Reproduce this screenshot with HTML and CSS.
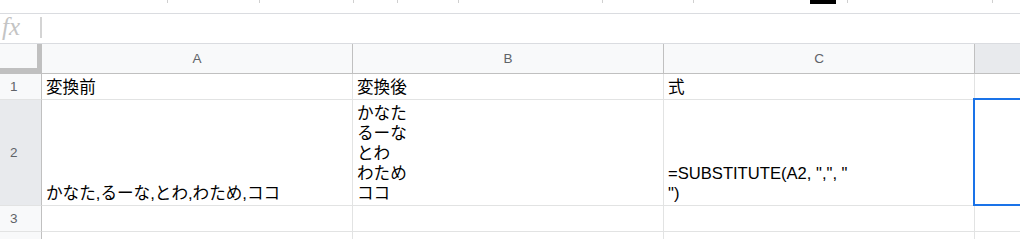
FILE: index.html
```html
<!DOCTYPE html>
<html lang="ja">
<head>
<meta charset="utf-8">
<link rel="stylesheet" href="styles.css">
</head>
<body>
<div class="toolbar">
  <span class="tick t1"></span>
  <span class="tick t2"></span>
  <span class="tick t3"></span>
  <span class="tick t4"></span>
  <span class="tick t5"></span>
  <span class="tick t6"></span>
  <span class="tick t7"></span>
  <span class="blk"></span>
  <span class="tick t8"></span>
  <span class="tick t9"></span>
</div>
<div class="fbar">
  <span class="fx">fx</span>
  <span class="fdiv"></span>
</div>
<div class="grid">
  <div class="corner"></div>
  <div class="ch">A</div>
  <div class="ch">B</div>
  <div class="ch">C</div>
  <div class="ch sel">&nbsp;</div>

  <div class="rh">1</div>
  <div class="cell">変換前</div>
  <div class="cell">変換後</div>
  <div class="cell">式</div>
  <div class="cell"></div>

  <div class="rh sel">2</div>
  <div class="cell">かなた,るーな,とわ,わため,ココ</div>
  <div class="cell">かなた<br>るーな<br>とわ<br>わため<br>ココ</div>
  <div class="cell">=SUBSTITUTE(A2, ",", "<br>")</div>
  <div class="cell active"><div class="selbox"></div></div>

  <div class="rh">3</div>
  <div class="cell"></div>
  <div class="cell"></div>
  <div class="cell"></div>
  <div class="cell"></div>

  <div class="rh">4</div>
  <div class="cell"></div>
  <div class="cell"></div>
  <div class="cell"></div>
  <div class="cell"></div>
</div>
</body>
</html>
```
FILE: styles.css
```css
html, body {
  margin: 0;
  padding: 0;
  background: #fff;
  width: 1020px;
  height: 239px;
  overflow: hidden;
  font-family: "Liberation Sans", "Noto Sans CJK JP", sans-serif;
}

.toolbar {
  height: 13px;
  border-bottom: 1px solid #dadce0;
  display: flex;
  align-items: flex-start;
}
.tick {
  width: 1px;
  height: 3px;
  background: #d0d0d0;
}
.t1 { margin-left: 167px; }
.t2 { margin-left: 91px; }
.t3 { margin-left: 93px; }
.t4 { margin-left: 43px; }
.t5 { margin-left: 60px; }
.t6 { margin-left: 143px; }
.t7 { margin-left: 90px; }
.blk {
  margin-left: 116px;
  width: 26px;
  height: 4px;
  background: #000;
}
.t8 { margin-left: 11px; }
.t9 { margin-left: 144px; }

.fbar {
  height: 29px;
  border-bottom: 1px solid #dadce0;
  display: flex;
  align-items: flex-start;
}
.fx {
  font-family: "Liberation Serif", serif;
  font-style: italic;
  font-size: 25px;
  line-height: 25px;
  color: #c4c4c4;
  margin-top: 0;
  margin-left: 2px;
  width: 38px;
}
.fdiv {
  width: 2px;
  height: 21px;
  margin-top: 3px;
  background: #d4d4d4;
}

.grid {
  display: grid;
  grid-template-columns: 42px 311px 311px 311px 45px;
  grid-template-rows: 30px 26px 106px 26px 26px;
}

.corner {
  background: #f8f9fa;
  border-right: 5px solid #c0c0c0;
  border-bottom: 6px solid #c0c0c0;
}
.ch {
  background: #f8f9fa;
  border-right: 1px solid #c0c0c0;
  border-bottom: 1px solid #c0c0c0;
  color: #5f6368;
  font-size: 13.5px;
  display: flex;
  align-items: center;
  justify-content: center;
}
.ch.sel { background: #e8eaed; border-right: none; }

.rh {
  background: #f8f9fa;
  border-right: 1px solid #c0c0c0;
  border-bottom: 1px solid #e2e3e3;
  color: #5f6368;
  font-size: 13.5px;
  display: flex;
  align-items: center;
  padding-left: 10px;
}
.rh.sel { background: #e8eaed; }

.cell {
  border-right: 1px solid #e2e3e3;
  border-bottom: 1px solid #e2e3e3;
  color: #000;
  font-size: 16.6px;
  line-height: 20px;
  padding: 0 4px 1px 4px;
  display: flex;
  flex-direction: column;
  justify-content: flex-end;
  white-space: nowrap;
  overflow: hidden;
}
.cell:nth-child(5n) { border-right: none; }

.active { position: relative; overflow: visible; }
.selbox {
  position: absolute;
  top: -2px;
  left: -2px;
  right: -4px;
  bottom: -1px;
  border: 2px solid #1a73e8;
}
```
